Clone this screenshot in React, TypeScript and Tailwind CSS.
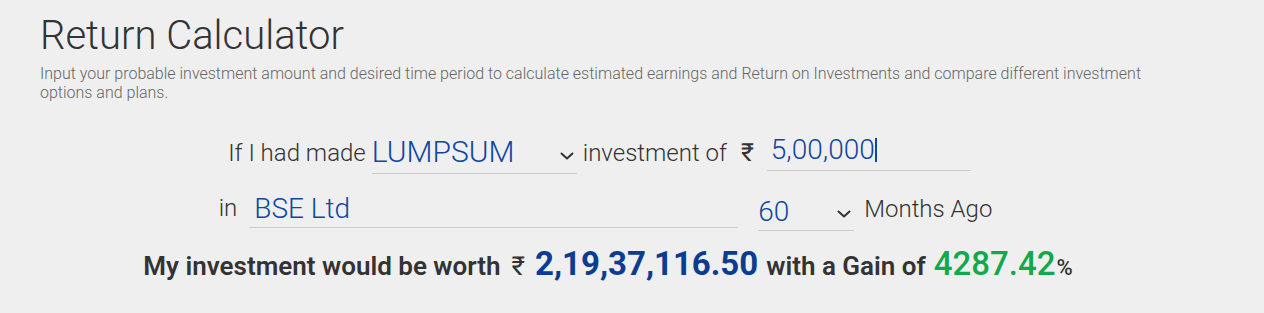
import React from "react";

const Chevron = () => (
  <svg width="14" height="8" viewBox="0 0 14 8" fill="none" className="shrink-0">
    <path d="M1.5 1.5 L7 6.5 L12.5 1.5" stroke="#333" strokeWidth="2" strokeLinecap="round" strokeLinejoin="round" />
  </svg>
);

export default function App() {
  return (
    <div
      className="w-[1264px] h-[313px] bg-[#efefef] text-[#333] overflow-hidden"
      style={{ fontFamily: "Roboto, 'Liberation Sans', sans-serif" }}
    >
      <div className="pl-10 pr-[90px] pt-[12px]">
        <h1 className="text-[40px] leading-[48px] font-light text-[#333]">Return Calculator</h1>
        <p className="mt-[4px] text-[16px] leading-[19px] text-[#666] font-light">
          Input your probable investment amount and desired time period to calculate estimated earnings and Return on
          Investments and compare different investment options and plans.
        </p>
      </div>

      <div className="w-[1140px] ml-10">
        <div className="flex items-end justify-center mt-[31px] -ml-[21px]">
          <span className="text-[24px] font-light leading-[30px] mb-[6px]">If I had made</span>
          <div className="ml-[6px] w-[205px] h-[38px] border-b border-[#cccccc] flex items-center justify-between">
            <span className="text-[30px] leading-[32px] text-[#0d47a1] font-light mb-[6px]">LUMPSUM</span>
            <span className="mr-[3px] mt-[2px]"><Chevron /></span>
          </div>
          <span className="ml-[6px] text-[24px] font-light leading-[30px] mb-[6px]">investment of</span>
          <span className="ml-[14px] text-[25px] leading-[30px] mb-[6px]">₹</span>
          <div className="ml-[13px] w-[204px] h-[38px] border-b border-[#cccccc] mb-[3px] pl-[4px] flex items-center">
            <span className="text-[28px] leading-[32px] text-[#0d47a1] font-light mb-[3px]">5,00,000</span>
            <span className="w-[2px] h-[24px] bg-[#0d47a1] mb-[3px]" />
          </div>
        </div>

        <div className="flex items-end justify-center mt-[16px] -ml-[9px]">
          <span className="text-[24px] font-light leading-[30px] mb-[8px]">in</span>
          <div className="ml-[12px] w-[489px] h-[38px] border-b border-[#cccccc] mb-[3px] pl-[5px] flex items-center">
            <span className="text-[28px] leading-[32px] text-[#0d47a1] font-light">BSE Ltd</span>
          </div>
          <div className="ml-[20px] w-[96px] h-[40px] border-b border-[#cccccc] flex items-center justify-between">
            <span className="text-[28px] leading-[32px] text-[#0d47a1] font-light mt-[2px]">60</span>
            <span className="mr-[3px] mt-[6px]"><Chevron /></span>
          </div>
          <span className="ml-[10px] text-[24px] font-light leading-[30px] mb-[7px]">Months Ago</span>
        </div>

        <div className="flex items-baseline justify-center mt-[8px] -ml-[4px]">
          <span className="text-[26px] font-semibold">My investment would be worth</span>
          <span className="ml-[11px] text-[26px]">₹</span>
          <span className="ml-[10px] text-[33px] font-bold text-[#0a3d91]">2,19,37,116.50</span>
          <span className="ml-[8px] text-[26px] font-semibold">with a Gain of</span>
          <span className="ml-[8px] text-[33px] font-medium text-[#10a94c]">4287.42</span>
          <span className="ml-[1px] text-[22px] font-medium">%</span>
        </div>
      </div>
    </div>
  );
}
